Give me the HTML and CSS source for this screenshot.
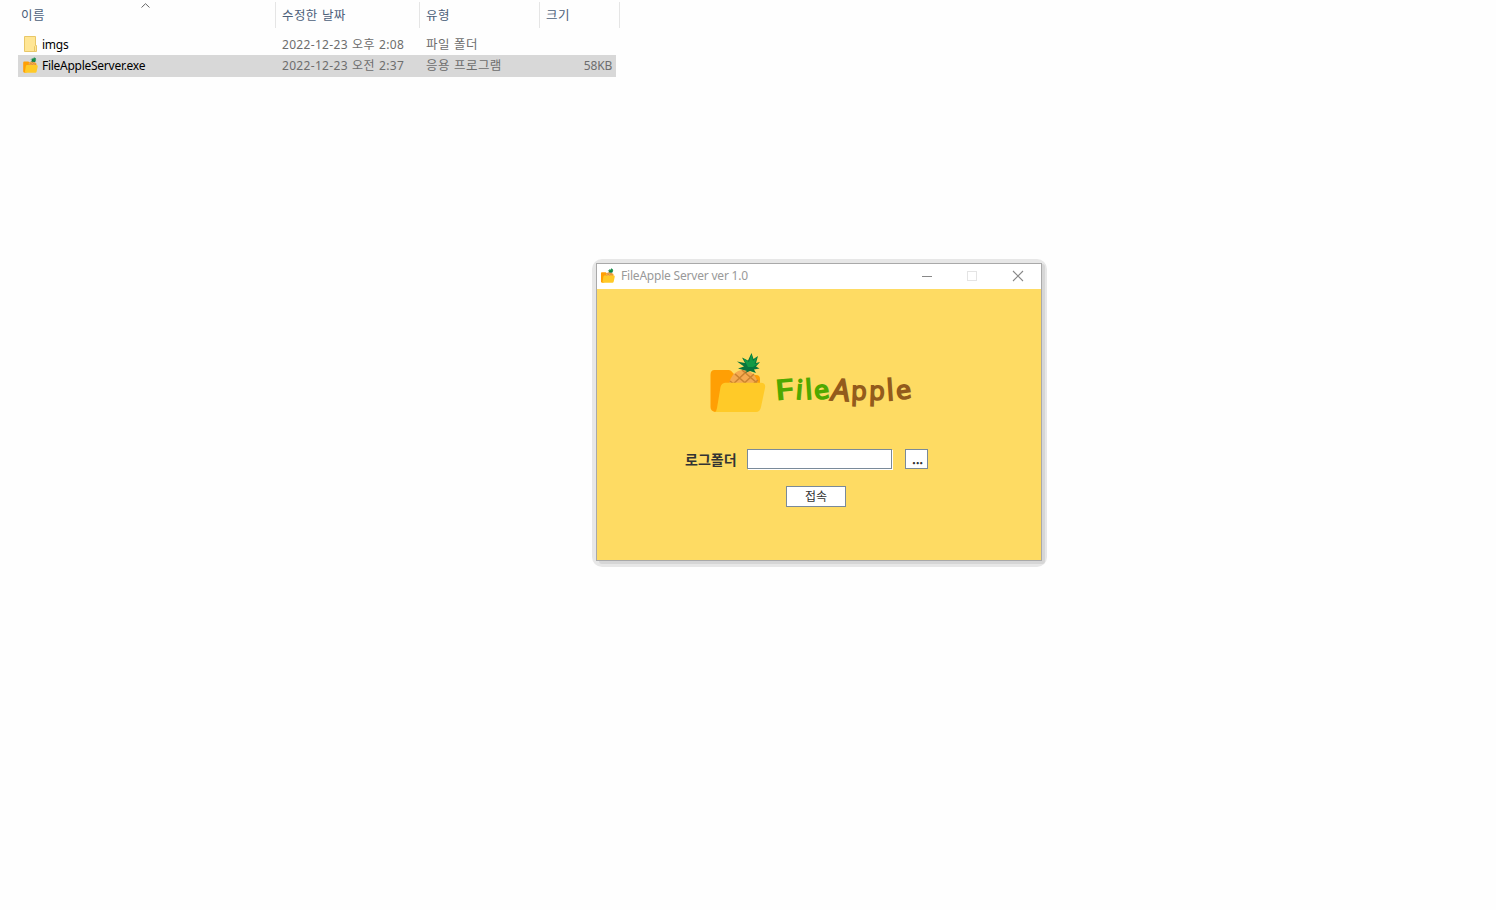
FILE: index.html
```
<!DOCTYPE html>
<html lang="ko">
<head>
<meta charset="utf-8">
<title>FileApple Server</title>
<link rel="stylesheet" href="styles.css">
</head>
<body>
<svg class="defs" width="0" height="0" aria-hidden="true">
  <symbol id="pine-folder" viewBox="0 0 56 60">
    <path fill="#ff9f04" d="M4.500 17H19Q21 17 23 20L25 22H46Q50 22 50 26V40L10 59H5Q.5 58 .5 54V22Q.5 17 4.500 17Z"/>
    <ellipse cx="33.500" cy="31.500" rx="14" ry="14.500" fill="#f5aa50"/>
    <path fill="none" stroke="#cb832f" stroke-width="1.600" d="M20 28L32 38M25 21L42 36M32 17L47 30M20 34L37 18M28 36L44 21M38 35L48 27"/>
    <path fill="#08753d" d="M37 18L28 15.500L34 13.500L27 8.500L35 10L32 4.500L38 7.500L41.500 0L43.500 6L48 3L46 10L50 9L46 13.500L49.500 15.500L44 16.500L46 20L40 18L35 20Z"/>
    <path fill="#129a45" d="M38 14L33 5L39 9L41.500 1L43 8L47 4L44.500 11L49 10L43 14Z"/>
    <path fill="#ffca28" d="M15 29.700H51Q56 30 55 35L51 54Q50 59 46 59H5Q6.500 58 7 55L10.500 34Q11.500 30 15 29.700Z"/>
  </symbol>
</svg>

<main class="explorer">
  <div class="row head">
    <div class="cell"><span class="label">이름</span>
      <svg class="sort" width="9" height="5" viewBox="0 0 9 5"><path d="M.5 4.5L4.5 .7L8.5 4.5"/></svg>
    </div>
    <div class="cell">수정한 날짜</div>
    <div class="cell">유형</div>
    <div class="cell">크기</div>
  </div>
  <div class="row item">
    <div class="cell name">
      <svg class="icon" width="16" height="18" viewBox="0 0 16 18"><path d="M2.500 1.500H13.500V10.500H14.500V16.500H2.500Z" fill="#ffe695" stroke="#e8c768"/><path d="M12.500 16V11.500L13.500 10.500" fill="none" stroke="#e8c768"/></svg>
      <span>imgs</span>
    </div>
    <div class="cell date">2022-12-23 오후 2:08</div>
    <div class="cell">파일 폴더</div>
    <div class="cell size"></div>
  </div>
  <div class="row item selected">
    <div class="cell name">
      <svg class="icon" width="16" height="16" viewBox="-4 0 60 60" preserveAspectRatio="none"><use href="#pine-folder" width="56" height="60"/></svg>
      <span>FileAppleServer.exe</span>
    </div>
    <div class="cell date">2022-12-23 오전 2:37</div>
    <div class="cell">응용 프로그램</div>
    <div class="cell size">58KB</div>
  </div>
</main>

<section class="window">
  <header class="titlebar">
    <svg class="app" width="15" height="15" viewBox="-3 0 59 60" preserveAspectRatio="none"><use href="#pine-folder" width="56" height="60"/></svg>
    <span class="title">FileApple Server ver 1.0</span>
    <svg class="controls" width="104" height="12" viewBox="0 0 104 12"><path d="M1 6.500H11" stroke="#888"/><rect x="46.500" y="1.500" width="9" height="9" fill="none" stroke="#e4e4e4"/><path d="M92 1L102 11M102 1L92 11" stroke="#888" stroke-width="1.100"/></svg>
  </header>
  <div class="client">
    <div class="brand">
      <svg width="56" height="60" viewBox="0 0 56 60"><use href="#pine-folder" width="56" height="60"/></svg>
      <div class="wordmark"><span class="green f">F</span><span class="green i">i</span><span class="green l">l</span><span class="green e">e</span><span class="a">A</span><span class="p">p</span><span class="p">p</span><span class="l2">l</span><span class="e">e</span></div>
    </div>
    <div class="field">
      <label for="log">로그폴더</label>
      <input id="log" type="text">
      <button class="browse">...</button>
    </div>
    <button class="connect">접속</button>
  </div>
</section>
</body>
</html>
```
FILE: styles.css
```
* { box-sizing: border-box; }
body {
  margin: 0;
  height: 910px;
  overflow: hidden;
  background: #fefefe;
  font: 12px/20px "Noto Sans", "Noto Sans CJK KR", sans-serif;
  color: #6d6d6d;
}
.defs { display: block; }
.explorer { padding: 2px 0 0 18px; width: 620px; }
.row { display: grid; grid-template-columns: 258px 144px 120px 80px; }
.head { height: 26px; margin-bottom: 6px; color: #4c607a; font-size: 12.5px; line-height: 27px; word-spacing: .6px; letter-spacing: .4px; }
.head .cell { height: 26px; border-right: 1px solid #e5e5e5; padding-left: 6px; position: relative; }
.head .cell:first-child { padding-left: 3px; }
.sort { position: absolute; left: 123px; top: 1px; fill: none; stroke: #666; }
.item { height: 21px; }
.item .cell { padding-left: 6px; line-height: 21px; white-space: nowrap; font-size: 12.5px; letter-spacing: .45px; word-spacing: .4px; }
.item .name { display: flex; align-items: center; gap: 4px; padding-left: 4px; color: #000; font-size: 12px; letter-spacing: -.27px; }
.item .name span { line-height: 19px; height: 21px; }
.item:not(.selected) .name span { line-height: 21px; }
.icon { width: 16px; flex: none; margin-top: -1px; }
.item .date { font-size: 12px; letter-spacing: .32px; word-spacing: .8px; }
.item .size { padding: 0 8px 0 0; text-align: right; font-size: 12px; letter-spacing: -.2px; }
.selected { width: 598px; height: 22px; background: #d8d8d8; grid-template-columns: 258px 144px 120px 76px; }
.selected .size { padding-right: 4px; }
.selected .icon { margin-top: -2px; }
.window {
  position: absolute;
  left: 596px;
  top: 263px;
  width: 446px;
  height: 298px;
  border: 1px solid #a9a9a9;
  background: #fedb63;
}
.window::before {
  content: "";
  position: absolute;
  z-index: -1;
  inset: -5px -6px -7px -5px;
  border-radius: 10px;
  background: #e7e7e7;
}
.window::after {
  content: "";
  position: absolute;
  z-index: -1;
  inset: 0 -4px -4px 2px;
  border-radius: 3px;
  background: #d6d6d6;
}
.titlebar { height: 25px; background: #fff; display: flex; align-items: center; padding: 0 0 2px 3px; }
.title { margin-left: 6px; color: #999; font-size: 12px; line-height: 23px; letter-spacing: -.2px; }
.controls { margin-left: auto; margin-right: 16px; fill: none; }
.client { display: flex; flex-direction: column; padding-top: 64px; }
.brand { display: flex; margin-left: 113px; height: 60px; }
.wordmark {
  display: flex;
  margin: 14px 0 0 9px;
  color: #935b1c;
  font: 400 27px/44px "Open Sans", sans-serif;
  -webkit-text-stroke: 1.7px currentColor;
  paint-order: stroke fill;
  stroke-linejoin: round;
}
.wordmark span { display: flex; justify-content: center; transform-origin: 50% 60%; }
.wordmark .green { color: #4fa800; }
.wordmark .f { width: 19px; transform: rotate(-5deg) scaleX(1.25); }
.wordmark .i { width: 10px; transform: rotate(5deg); }
.wordmark .l { width: 10px; transform: rotate(-4deg); }
.wordmark .e { width: 16px; transform: rotate(-9deg) scaleY(.95); }
.wordmark .a { width: 20px; transform: translateY(1px) rotate(3deg) skewX(-8deg) scale(1.08, 1.1); }
.wordmark .p { width: 18px; transform: translateY(1px) rotate(2deg) scale(.94, .96); }
.wordmark .l2 { width: 11px; transform: translateY(1px) rotate(-4deg) scaleY(1.08); }
.wordmark .p + .l2 { margin-left: -1px; }
.field { display: flex; height: 22px; margin: 36px 0 0 88px; }
.field label { width: 62px; color: #333; font: bold 14px/20px "Noto Sans CJK KR", sans-serif; }
.field input { width: 145px; height: 20px; padding: 0 3px; border: 1px solid #7a8a99; border-radius: 0; outline: 0; background: #fff; box-shadow: 1px 1px 0 #fff; }
button { padding: 0; border: 1px solid #7a8a99; background: #fff; color: #333; font: 12px/18px "Noto Sans CJK KR", sans-serif; }
.browse { width: 23px; height: 20px; margin-left: 13px; padding-left: 2px; font-weight: bold; letter-spacing: -.3px; }
.connect { width: 60px; height: 21px; margin: 15px 0 0 189px; padding-bottom: 2px; line-height: 17px; font-weight: 400; }
```
